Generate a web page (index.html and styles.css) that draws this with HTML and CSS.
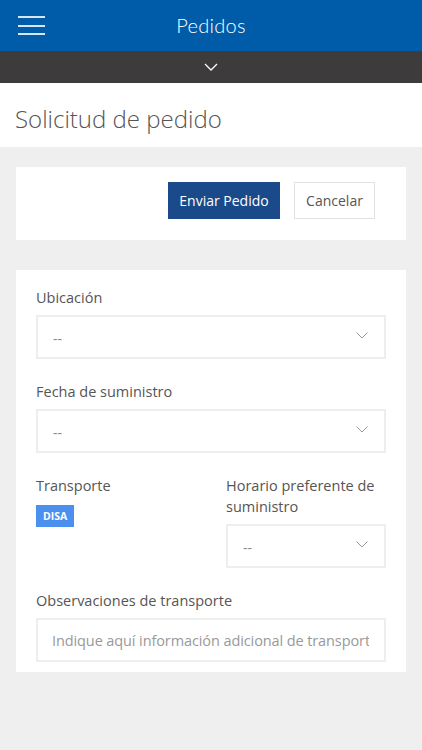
FILE: index.html
```html
<!DOCTYPE html>
<html lang="es">
<head>
  <meta charset="UTF-8">
  <meta name="viewport" content="width=device-width, initial-scale=1.0">
  <title>Pedidos</title>
  <link rel="stylesheet" href="styles.css">
</head>
<body>
  <header class="topbar">
    <button class="menu-btn" aria-label="Menu">
      <span></span><span></span><span></span>
    </button>
    <h1 class="topbar-title">Pedidos</h1>
  </header>
  <div class="subbar">
    <svg width="14" height="8" viewBox="0 0 14 8"><path d="M1 1 L7 7 L13 1" fill="none" stroke="#fff" stroke-width="1.3"/></svg>
  </div>

  <div class="page-title">
    <h2>Solicitud de pedido</h2>
  </div>

  <main class="content">
    <section class="card actions">
      <button class="btn btn-primary">Enviar Pedido</button>
      <button class="btn btn-default">Cancelar</button>
    </section>

    <section class="card form">
      <div class="field">
        <label>Ubicación</label>
        <div class="select"><span>--</span>
          <svg width="12" height="7" viewBox="0 0 12 7"><path d="M0.5 0.5 L6 6 L11.5 0.5" fill="none" stroke="#999" stroke-width="1"/></svg>
        </div>
      </div>

      <div class="field">
        <label>Fecha de suministro</label>
        <div class="select"><span>--</span>
          <svg width="12" height="7" viewBox="0 0 12 7"><path d="M0.5 0.5 L6 6 L11.5 0.5" fill="none" stroke="#999" stroke-width="1"/></svg>
        </div>
      </div>

      <div class="field-row">
        <div class="field">
          <label>Transporte</label>
          <span class="badge">DISA</span>
        </div>
        <div class="field">
          <label>Horario preferente de suministro</label>
          <div class="select"><span>--</span>
            <svg width="12" height="7" viewBox="0 0 12 7"><path d="M0.5 0.5 L6 6 L11.5 0.5" fill="none" stroke="#999" stroke-width="1"/></svg>
          </div>
        </div>
      </div>

      <div class="field last">
        <label>Observaciones de transporte</label>
        <div class="input"><span>Indique aquí información adicional de transporte</span></div>
      </div>
    </section>
  </main>
</body>
</html>
```

FILE: styles.css
```css
body {
  margin: 0;
  font-family: "Open Sans", Arial, sans-serif;
  background-color: #efefef;
  color: #555;
  height: 750px;
}

.topbar {
  height: 51px;
  background-color: #005ca8;
  display: flex;
  align-items: center;
  justify-content: center;
  position: relative;
}

.menu-btn {
  position: absolute;
  left: 18px;
  top: 16px;
  width: 27px;
  height: 19px;
  padding: 0;
  border: none;
  background: none;
  display: flex;
  flex-direction: column;
  justify-content: space-between;
}

.menu-btn span {
  display: block;
  height: 2px;
  background-color: #d6e6f5;
}

.topbar-title {
  margin: 0 0 2px;
  font-family: Lato, sans-serif;
  font-weight: 300;
  font-size: 20px;
  letter-spacing: 0.3px;
  color: #fff;
}

.subbar {
  height: 32px;
  background-color: #3d3b3c;
  display: flex;
  align-items: center;
  justify-content: center;
}

.page-title {
  height: 64px;
  background-color: #fff;
  display: flex;
  align-items: center;
  padding-left: 15px;
}

.page-title h2 {
  margin: 6px 0 0;
  font-weight: 300;
  font-size: 24px;
  color: #555;
}

.content {
  padding: 20px 16px;
}

.card {
  background-color: #fff;
}

.actions {
  height: 73px;
  box-sizing: border-box;
  display: flex;
  align-items: flex-start;
  justify-content: flex-end;
  gap: 14px;
  padding: 15px 31px 0 0;
  margin-bottom: 30px;
}

.btn {
  height: 37px;
  font-family: "Open Sans", Arial, sans-serif;
  font-size: 14px;
  border-radius: 0;
  cursor: pointer;
}

.btn-primary {
  width: 112px;
  background-color: #1a4a8a;
  border: 1px solid #1a4a8a;
  color: #fff;
}

.btn-default {
  width: 81px;
  background-color: #fff;
  border: 1px solid #e2e2e2;
  color: #555;
}

.form {
  padding: 17px 20px 10px;
}

.field {
  margin-bottom: 22px;
}

.field.last {
  margin-bottom: 0;
}

.field label {
  display: block;
  font-size: 14.5px;
  line-height: 21px;
  margin-bottom: 7px;
}

.field-row {
  display: flex;
  gap: 30px;
}

.field-row .field {
  flex: 1;
  min-width: 0;
}

.select {
  height: 44px;
  box-sizing: border-box;
  border: 2px solid #eeeeee;
  display: flex;
  align-items: center;
  justify-content: space-between;
  padding: 3px 16px 0 15px;
  font-size: 14px;
  color: #888;
}

.select svg {
  margin-top: -6px;
}

.input {
  height: 44px;
  box-sizing: border-box;
  border: 2px solid #eeeeee;
  display: flex;
  align-items: center;
  padding: 0 15px 0 14px;
  font-size: 14.5px;
  letter-spacing: -0.1px;
  color: #999;
}

.input span {
  white-space: nowrap;
  overflow: hidden;
}

.badge {
  display: inline-block;
  margin-top: -2px;
  padding: 3px 7px;
  background-color: #4b90ee;
  color: #fff;
  font-size: 10.5px;
  font-weight: 700;
  line-height: 16px;
}
```
